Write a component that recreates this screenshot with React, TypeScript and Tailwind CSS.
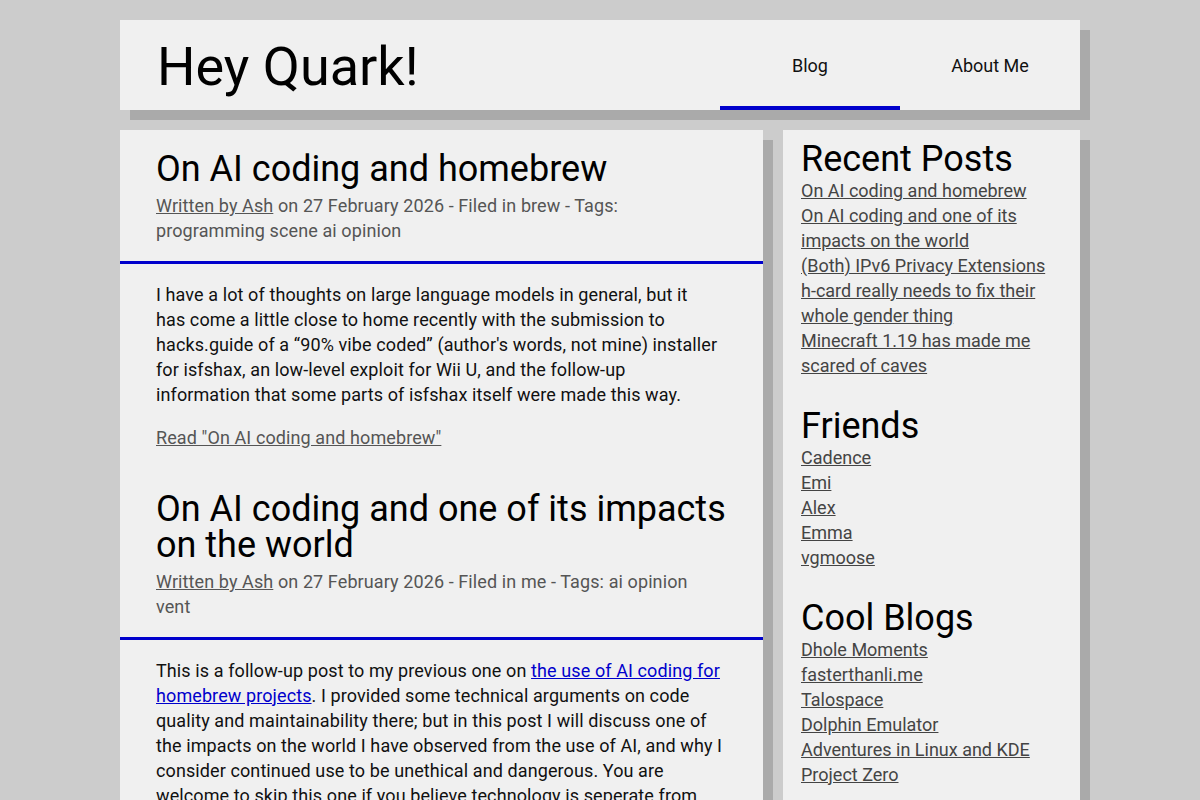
import React from "react";

type Post = {
  title: string;
  // meta line after "Tags:" is split where the layout wraps it
  tags: string[];
  filed: string;
  body: React.ReactNode;
  readMore?: string;
};

const lines = (parts: React.ReactNode[]) =>
  parts.map((p, i) => (
    <React.Fragment key={i}>
      {i > 0 && <br />}
      {p}
    </React.Fragment>
  ));

const posts: Post[] = [
  {
    title: "On AI coding and homebrew",
    filed: "brew",
    tags: ["", "programming scene ai opinion"],
    body: (
      <p>
        {lines([
          "I have a lot of thoughts on large language models in general, but it",
          "has come a little close to home recently with the submission to",
          "hacks.guide of a “90% vibe coded” (author's words, not mine) installer",
          "for isfshax, an low-level exploit for Wii U, and the follow-up",
          "information that some parts of isfshax itself were made this way.",
        ])}
      </p>
    ),
    readMore: 'Read "On AI coding and homebrew"',
  },
  {
    title: "On AI coding and one of its impacts on the world",
    filed: "me",
    tags: [" ai opinion", "vent"],
    body: (
      <p>
        {lines([
          <>
            This is a follow-up post to my previous one on{" "}
            <a href="#" className="text-[#0000cc] underline">
              the use of AI coding for
            </a>
          </>,
          <>
            <a href="#" className="text-[#0000cc] underline">
              homebrew projects
            </a>
            . I provided some technical arguments on code
          </>,
          "quality and maintainability there; but in this post I will discuss one of",
          "the impacts on the world I have observed from the use of AI, and why I",
          "consider continued use to be unethical and dangerous. You are",
          "welcome to skip this one if you believe technology is seperate from",
          "politics.",
        ])}
      </p>
    ),
  },
];

const sidebar = [
  {
    heading: "Recent Posts",
    links: [
      "On AI coding and homebrew",
      "On AI coding and one of its impacts on the world",
      "(Both) IPv6 Privacy Extensions",
      "h-card really needs to fix their whole gender thing",
      "Minecraft 1.19 has made me scared of caves",
    ],
  },
  { heading: "Friends", links: ["Cadence", "Emi", "Alex", "Emma", "vgmoose"] },
  {
    heading: "Cool Blogs",
    links: [
      "Dhole Moments",
      "fasterthanli.me",
      "Talospace",
      "Dolphin Emulator",
      "Adventures in Linux and KDE",
      "Project Zero",
    ],
  },
];

function PostEntry({ post }: { post: Post }) {
  return (
    <article>
      <header className="px-[36px] pt-[21px] pb-[18px] border-b-[3px] border-[#0000cc]">
        <h2 className="text-[36px] leading-[36px] text-black mb-[6px]">{post.title}</h2>
        <div className="text-[18px] leading-[25px] tracking-[0.1px] text-[#555]">
          <a href="#" className="underline">
            Written by Ash
          </a>{" "}
          on 27 February 2026 - Filed in {post.filed} - Tags:{lines(post.tags)}
        </div>
      </header>
      <div className="px-[36px] pt-[18px] pb-[20px] text-[18px] leading-[25px] tracking-[0.1px] text-[#111] space-y-[18px]">
        {post.body}
        {post.readMore && (
          <p>
            <a href="#" className="underline text-[#555]">
              {post.readMore}
            </a>
          </p>
        )}
      </div>
    </article>
  );
}

export default function App() {
  return (
    <div
      className="min-h-screen bg-[#cccccc] pt-[20px]"
      style={{ fontFamily: "Roboto, 'Noto Sans', sans-serif" }}
    >
      <div className="w-[960px] mx-auto">
        <header className="h-[90px] bg-[#f0f0f0] shadow-[10px_10px_0_#aaaaaa] flex items-stretch">
          <h1 className="flex-1 pl-[37px] text-[54px] leading-[94px] text-black">Hey Quark!</h1>
          <nav className="flex text-[18px] text-[#111]">
            <a href="#" className="w-[180px] flex items-center justify-center border-b-[4px] border-[#0000cc] pt-[4px]">
              Blog
            </a>
            <a href="#" className="w-[180px] flex items-center justify-center border-b-[4px] border-transparent pt-[4px]">
              About Me
            </a>
          </nav>
        </header>

        <div className="mt-[20px] flex items-start gap-[20px]">
          <main className="w-[643px] bg-[#f0f0f0] shadow-[10px_10px_0_#aaaaaa]">
            {posts.map((p) => (
              <PostEntry key={p.title} post={p} />
            ))}
          </main>

          <aside className="w-[297px] bg-[#f0f0f0] shadow-[10px_10px_0_#aaaaaa] px-[18px] pt-[11px] pb-[18px]">
            {sidebar.map((s, i) => (
              <section key={s.heading} className={i > 0 ? "mt-[30px]" : ""}>
                <h3 className="text-[36px] leading-[37px] text-black">{s.heading}</h3>
                <ul className="text-[18px] leading-[25px] text-[#444]">
                  {s.links.map((l) => (
                    <li key={l}>
                      <a href="#" className="underline">
                        {l}
                      </a>
                    </li>
                  ))}
                </ul>
              </section>
            ))}
          </aside>
        </div>
      </div>
    </div>
  );
}
